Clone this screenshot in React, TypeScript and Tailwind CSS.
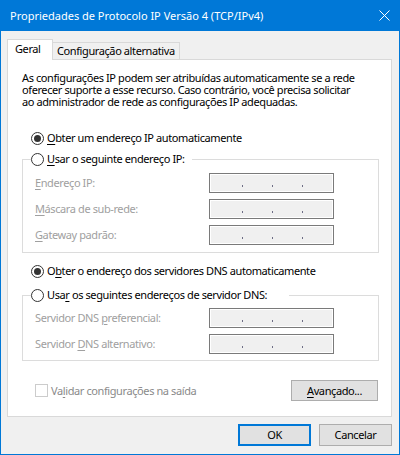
import React from "react";

const Radio = ({ checked }: { checked?: boolean }) => (
  <span className="w-[13px] h-[13px] rounded-full border border-[#333333] bg-white flex items-center justify-center shrink-0">
    {checked && <span className="w-[7px] h-[7px] rounded-full bg-[#333333]" />}
  </span>
);

const IpBox = () => (
  <div className="w-[125px] h-[20px] border border-[#7a7a7a] bg-[#f0f0f0] shadow-[inset_0_0_0_1px_#ffffff] flex items-start pt-[11px] pl-[32px] gap-[29px]">
    <span className="w-px h-[2px] bg-[#6d6d85]" />
    <span className="w-px h-[2px] bg-[#6d6d85]" />
    <span className="w-px h-[2px] bg-[#6d6d85]" />
  </div>
);

const Row = ({ children }: { children: React.ReactNode }) => (
  <div className="flex items-center h-[20px]">
    <div className="w-[174px] text-[#a0a0a0] leading-[14px]">{children}</div>
    <IpBox />
  </div>
);

const U = ({ children }: { children: React.ReactNode }) => (
  <span className="underline underline-offset-[2px] decoration-1">{children}</span>
);

export default function App() {
  return (
    <div className="w-[400px] h-[455px] bg-[#0078d7] flex flex-col font-['Noto_Sans',sans-serif] text-[11px] tracking-[-0.4px] text-black">
      <div className="h-[31px] flex items-center pl-[10px] shrink-0">
        <span className="text-white leading-[14px] tracking-normal">Propriedades de Protocolo IP Versão 4 (TCP/IPv4)</span>
        <svg className="ml-auto mr-[10px]" width="11" height="11" viewBox="0 0 11 11">
          <path d="M0.5 0.5 L10.5 10.5 M10.5 0.5 L0.5 10.5" stroke="#ffffff" strokeWidth="1" fill="none" />
        </svg>
      </div>
      <div className="flex-1 mx-px mb-px bg-[#f0f0f0] flex flex-col">
        <div className="flex items-end ml-[6px] mt-[8px] h-[21px] -mb-px">
          <div className="relative z-10 w-[46px] h-[21px] bg-white border border-b-0 border-[#d9d9d9] flex items-start pt-[2px] pl-[7px] leading-[14px]">
            Geral
          </div>
          <div className="w-[127px] h-[18px] bg-[#f0f0f0] border-t border-r border-[#d9d9d9] flex items-start pt-[1px] pl-[4px] leading-[14px] whitespace-nowrap">
            Configuração alternativa
          </div>
        </div>
        <div className="ml-[6px] w-[385px] h-[358px] bg-white border border-[#d9d9d9] flex flex-col">
          <p className="pl-[14px] pt-[12px] leading-[12px] whitespace-nowrap">
            As configurações IP podem ser atribuídas automaticamente se a rede
            <br />
            oferecer suporte a esse recurso. Caso contrário, você precisa solicitar
            <br />
            ao administrador de rede as configurações IP adequadas.
          </p>
          <div className="ml-[23px] mt-[23px] flex items-center gap-[3px] h-[14px] leading-[14px]">
            <Radio checked />
            <span>
              <U>O</U>bter um endereço IP automaticamente
            </span>
          </div>
          <fieldset className="ml-[14px] mt-[7px] w-[357px] border border-[#dcdcdc] p-0">
            <legend className="ml-[8px] w-[161px] h-[14px] flex items-center gap-[3px] leading-[14px] bg-white p-0">
              <Radio />
              <span className="whitespace-nowrap">
                <U>U</U>sar o seguinte endereço IP:
              </span>
            </legend>
            <div className="flex flex-col gap-[6px] pt-[7px] pb-[7px] pl-[12px]">
              <Row>
                <U>E</U>ndereço IP:
              </Row>
              <Row>
                <U>M</U>áscara de sub-rede:
              </Row>
              <Row>
                <U>G</U>ateway padrão:
              </Row>
            </div>
          </fieldset>
          <div className="ml-[23px] mt-[11px] flex items-center gap-[3px] h-[14px] leading-[14px]">
            <Radio checked />
            <span>
              O<U>b</U>ter o endereço dos servidores DNS automaticamente
            </span>
          </div>
          <fieldset className="ml-[14px] mt-[10px] w-[357px] border border-[#dcdcdc] p-0">
            <legend className="ml-[8px] w-[258px] h-[14px] flex items-center gap-[3px] leading-[14px] bg-white p-0">
              <Radio />
              <span className="whitespace-nowrap">
                Usa<U>r</U> os seguintes endereços de servidor DNS:
              </span>
            </legend>
            <div className="flex flex-col gap-[6px] pt-[6px] pb-[6px] pl-[12px]">
              <Row>
                Servidor DNS <U>p</U>referencial:
              </Row>
              <Row>
                Servidor <U>D</U>NS alternativo:
              </Row>
            </div>
          </fieldset>
          <div className="mt-[19px] ml-[27px] mr-[13px] flex items-center justify-between">
            <div className="flex items-center gap-[3px]">
              <span className="w-[13px] h-[13px] border border-[#cccccc] bg-white" />
              <span className="text-[#8a8a8a] leading-[14px]">
                Va<U>l</U>idar configurações na saída
              </span>
            </div>
            <button className="w-[87px] h-[21px] bg-[#e1e1e1] border border-[#adadad] leading-[14px]">
              <U>A</U>vançado...
            </button>
          </div>
        </div>
        <div className="mt-[7px] mr-[7px] flex justify-end gap-[8px]">
          <button className="w-[73px] h-[22px] bg-[#e1e1e1] border-2 border-[#0078d7] leading-[14px]">OK</button>
          <button className="w-[73px] h-[22px] bg-[#e1e1e1] border border-[#adadad] leading-[14px]">Cancelar</button>
        </div>
      </div>
    </div>
  );
}
